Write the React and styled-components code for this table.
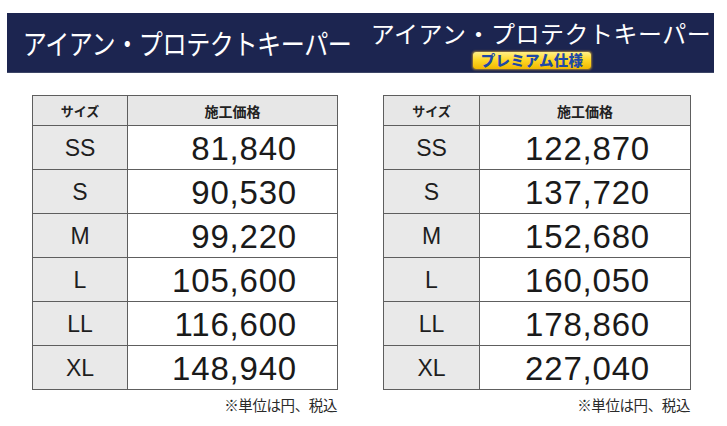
import React from "react";
import styled, { createGlobalStyle } from "styled-components";

const Global = createGlobalStyle`
  html, body { margin: 0; padding: 0; background: #ffffff; }
  body { font-family: "Liberation Sans", "Noto Sans CJK JP", sans-serif; }
`;

const Page = styled.div`
  width: 727px;
  height: 426px;
  padding-top: 13px;
  box-sizing: border-box;
  background: #ffffff;
`;

const Banner = styled.header`
  margin-left: 7px;
  width: 707px;
  height: 60px;
  background: #1c2550;
  display: grid;
  grid-template-columns: 355px 1fr;
  border-bottom: 1px solid #3c4566;
  box-sizing: border-box;
`;

const BannerHalf = styled.div`
  display: flex;
  flex-direction: column;
  align-items: center;
  justify-content: ${(p) => (p.$top ? "flex-start" : "center")};
  padding-top: ${(p) => (p.$top ? "8px" : "0")};
  box-sizing: border-box;
`;

const Title = styled.div`
  font-family: "Noto Sans CJK JP", sans-serif;
  font-weight: 400;
  color: #ffffff;
  white-space: nowrap;
  font-size: ${(p) => p.$size}px;
  letter-spacing: ${(p) => p.$ls}px;
  line-height: 1;
  transform: scaleX(${(p) => p.$sx});
  margin-top: ${(p) => p.$mt || 0}px;
  margin-left: ${(p) => p.$ml || 0}px;
`;

const Badge = styled.div`
  margin-top: 7px;
  margin-left: -12px;
  width: 118px;
  height: 17px;
  border-radius: 3px;
  background: linear-gradient(180deg, #fff08a 0%, #ffd92a 45%, #f1b800 100%);
  box-shadow: 0 0 2px 1px rgba(255, 190, 40, 0.55);
  display: flex;
  align-items: center;
  justify-content: center;
  font-family: "Noto Sans CJK JP", sans-serif;
  font-weight: 900;
  font-size: 14.5px;
  letter-spacing: 0.3px;
  color: #1f48a6;
  line-height: 1;
`;

const Tables = styled.div`
  display: grid;
  grid-template-columns: 306px 308px;
  column-gap: 45px;
  padding-left: 32px;
  margin-top: 22px;
`;

const Column = styled.div`
  display: flex;
  flex-direction: column;
`;

const Table = styled.table`
  border-collapse: collapse;
  width: 100%;
  table-layout: fixed;
  border: 1.5px solid #5e5e5e;
`;

const HeadCell = styled.th`
  height: 29px;
  padding: 0;
  background: #e7e7e7;
  border: 1.5px solid #5e5e5e;
  font-family: "Noto Sans CJK JP", sans-serif;
  font-weight: 700;
  font-size: ${(p) => p.$size}px;
  color: #222;
  text-align: center;
  width: ${(p) => p.$w || "auto"};
`;

const SizeCell = styled.td`
  height: 41px;
  padding: 2px 0 0 0;
  background: #e9e9e9;
  border: 1.5px solid #5e5e5e;
  text-align: center;
  font-family: "Liberation Sans", sans-serif;
  font-size: 23px;
  color: #1e1e1e;
`;

const PriceCell = styled.td`
  height: 41px;
  padding: 2px 40px 0 0;
  background: #ffffff;
  border: 1.5px solid #5e5e5e;
  text-align: right;
  font-family: "Liberation Sans", sans-serif;
  font-size: 33px;
  letter-spacing: 0.8px;
  color: #1a1a1a;
`;

const Note = styled.div`
  margin-top: 4px;
  text-align: right;
  padding-right: 1px;
  font-family: "Noto Sans CJK JP", sans-serif;
  font-size: 14.5px;
  color: #2a2a2a;
  letter-spacing: -0.4px;
`;

const standard = [
  ["SS", "81,840"],
  ["S", "90,530"],
  ["M", "99,220"],
  ["L", "105,600"],
  ["LL", "116,600"],
  ["XL", "148,940"],
];

const premium = [
  ["SS", "122,870"],
  ["S", "137,720"],
  ["M", "152,680"],
  ["L", "160,050"],
  ["LL", "178,860"],
  ["XL", "227,040"],
];

function PriceTable({ rows, sizeWidth }) {
  return (
    <Column>
      <Table>
        <thead>
          <tr>
            <HeadCell $size={13} $w={sizeWidth}>サイズ</HeadCell>
            <HeadCell $size={14}>施工価格</HeadCell>
          </tr>
        </thead>
        <tbody>
          {rows.map(([s, p]) => (
            <tr key={s}>
              <SizeCell>{s}</SizeCell>
              <PriceCell>{p}</PriceCell>
            </tr>
          ))}
        </tbody>
      </Table>
      <Note>※単位は円、税込</Note>
    </Column>
  );
}

export default function App() {
  return (
    <>
      <Global />
      <Page>
        <Banner>
          <BannerHalf>
            <Title $size={28} $ls={-0.5} $sx={0.86} $mt={1} $ml={6}>
              アイアン・プロテクトキーパー
            </Title>
          </BannerHalf>
          <BannerHalf $top>
            <Title $size={24} $ls={0.5} $sx={1} $ml={6}>
              アイアン・プロテクトキーパー
            </Title>
            <Badge>プレミアム仕様</Badge>
          </BannerHalf>
        </Banner>
        <Tables>
          <PriceTable rows={standard} sizeWidth="94px" />
          <PriceTable rows={premium} sizeWidth="95px" />
        </Tables>
      </Page>
    </>
  );
}
